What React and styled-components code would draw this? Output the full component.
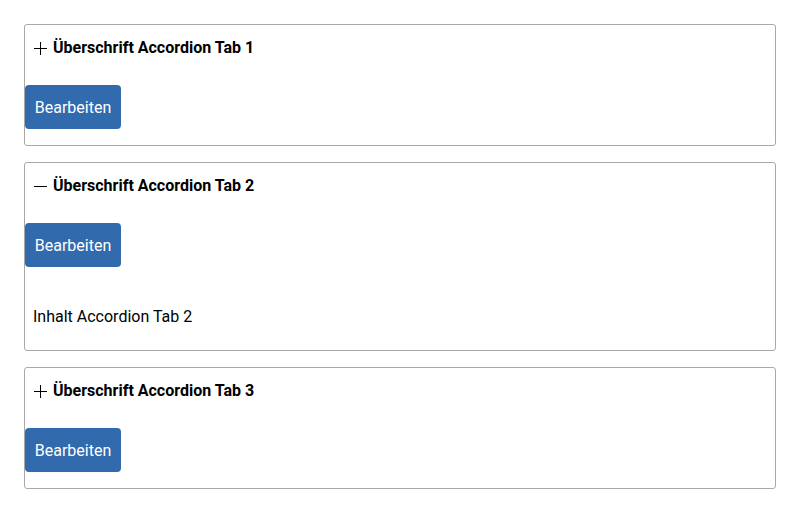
import React, { useState } from "react";
import styled, { createGlobalStyle } from "styled-components";

const GlobalStyle = createGlobalStyle`
  body {
    margin: 0;
    background: #ffffff;
    font-family: Roboto, "Liberation Sans", sans-serif;
    color: #000;
  }
`;

const Page = styled.div`
  padding: 24px 24px;
  display: flex;
  flex-direction: column;
  gap: 16px;
`;

const Panel = styled.div`
  border: 1px solid #a9a9a9;
  border-radius: 3px;
  padding-bottom: ${(p) => (p.$open ? "0" : "16px")};
`;

const Header = styled.div`
  display: flex;
  align-items: center;
  gap: 6px;
  padding: 12px 8px 10px 9px;
  font-size: 16px;
  font-weight: 700;
  line-height: 22px;
  cursor: pointer;
`;

const Toggle = styled.svg`
  width: 13px;
  height: 13px;
  flex: none;
`;

const EditButton = styled.button`
  display: block;
  margin-top: 16px;
  width: 96px;
  height: 44px;
  padding: 0;
  border: none;
  border-radius: 4px;
  background: #326aae;
  color: #ffffff;
  font-family: Roboto, "Liberation Sans", sans-serif;
  font-size: 16px;
  cursor: pointer;
`;

const Content = styled.div`
  padding: 39px 8px 22px;
  font-size: 16px;
  line-height: 22px;
`;

const tabs = [1, 2, 3];

const App = () => {
  const [open, setOpen] = useState(2);

  return (
    <>
      <GlobalStyle />
      <Page>
        {tabs.map((n) => (
          <Panel key={n} $open={open === n}>
            <Header onClick={() => setOpen(open === n ? null : n)}>
              <Toggle viewBox="0 0 13 13">
                <line x1="0" y1="6.5" x2="13" y2="6.5" stroke="#000" strokeWidth="1" />
                {open !== n && (
                  <line x1="6.5" y1="0" x2="6.5" y2="13" stroke="#000" strokeWidth="1" />
                )}
              </Toggle>
              Überschrift Accordion Tab {n}
            </Header>
            <EditButton>Bearbeiten</EditButton>
            {open === n && <Content>Inhalt Accordion Tab {n}</Content>}
          </Panel>
        ))}
      </Page>
    </>
  );
};

export default App;
